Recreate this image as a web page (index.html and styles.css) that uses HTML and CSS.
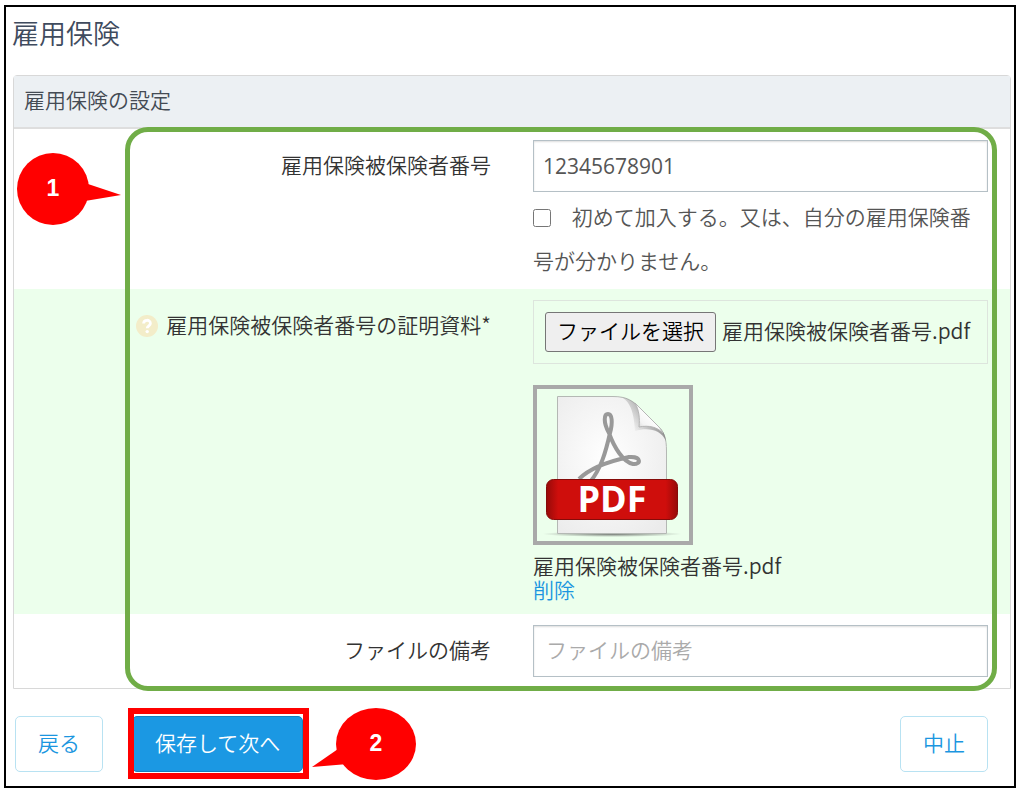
FILE: index.html
```html
<!DOCTYPE html>
<html lang="ja">
<head>
<meta charset="UTF-8">
<meta name="viewport" content="width=device-width, initial-scale=1">
<title>雇用保険</title>
<link rel="stylesheet" href="styles.css">
</head>
<body>
<form class="page">
	<h1 class="page-title">雇用保険</h1>

	<section class="panel">
		<h2 class="panel-heading">雇用保険の設定</h2>

		<div class="row">
			<div class="row-label">
				<label for="number">雇用保険被保険者番号</label>
			</div>
			<div class="row-field">
				<input class="text-input number-input" type="text" id="number" value="12345678901">
				<div class="check">
					<input class="check-box" type="checkbox" id="first">
					<label for="first">初めて加入する。又は、自分の雇用保険番号が分かりません。</label>
				</div>
			</div>
		</div>

		<div class="row row-green">
			<div class="row-label">
				<svg class="help" viewBox="0 0 22 22" aria-hidden="true">
					<circle cx="11" cy="11" r="11" fill="#f3edc9"/>
					<path d="M7.6 8.6C7.6 4.2 14.4 4.2 14.4 8.4C14.4 10.8 11.2 10.8 11.2 13.2" fill="none" stroke="#fff" stroke-width="2.8"/>
					<circle cx="11.2" cy="16.6" r="1.7" fill="#fff"/>
				</svg>
				<label for="file">雇用保険被保険者番号の証明資料*</label>
			</div>
			<div class="row-field">
				<div class="file-box">
					<input class="file-input" type="file" id="file">
					<label class="file-button" for="file">ファイルを選択</label>
					<span class="file-name">雇用保険被保険者番号.pdf</span>
				</div>
				<div class="thumb">
					<svg class="thumb-icon" viewBox="0 0 152 152" aria-hidden="true">
						<defs>
							<radialGradient id="paper" cx="0.45" cy="0.45" r="0.7">
								<stop offset="0" stop-color="#fff"/>
								<stop offset="1" stop-color="#ebebeb"/>
							</radialGradient>
							<linearGradient id="fold" x1="0" y1="1" x2="0.6" y2="0.4">
								<stop offset="0" stop-color="#b9b9b9"/>
								<stop offset="0.5" stop-color="#f4f4f4"/>
								<stop offset="1" stop-color="#fff"/>
							</linearGradient>
							<linearGradient id="shade" x1="0" y1="0.6" x2="0.7" y2="0.2">
								<stop offset="0.2" stop-color="#999" stop-opacity="0"/>
								<stop offset="1" stop-color="#777" stop-opacity="0.9"/>
							</linearGradient>
							<linearGradient id="ribbon">
								<stop offset="0" stop-color="#970a09"/>
								<stop offset="0.09" stop-color="#cf0e0c"/>
								<stop offset="0.91" stop-color="#cf0e0c"/>
								<stop offset="1" stop-color="#970a09"/>
							</linearGradient>
							<radialGradient id="floor">
								<stop offset="0" stop-color="#555" stop-opacity="0.8"/>
								<stop offset="1" stop-color="#555" stop-opacity="0"/>
							</radialGradient>
						</defs>
						<ellipse cx="75" cy="145" rx="70" ry="3" fill="url(#floor)"/>
						<path d="M20.5 7.5H76C90 7.5 96 12 103 19L121 37C127 43 129.5 49 129.5 62V144.5H20.5Z" fill="url(#paper)" stroke="#b4b8b4"/>
						<path d="M82 8C91 9 97 20 98 42C110 38 124 40 129 52C128 44 125 41 121 37L103 19C96 12 90 8 82 8Z" fill="url(#shade)"/>
						<path d="M98 14C102 21 103 29 102 38C112 36 120 38 126 44C124 40 122 38 121 37L103 19Z" fill="url(#fold)" stroke="#b5b5b5"/>
						<path d="M42 90C54 78 78 71 92 68C105 67 104 76 96 75C86 73 77 58 72 44C66 33 67 25 71 25C75 25 76 33 73 44C69 62 64 80 53 93" fill="none" stroke="#999" stroke-width="4"/>
						<rect x="9.5" y="90.5" width="131" height="40" rx="7" fill="url(#ribbon)" stroke="#850b0a"/>
						<text class="thumb-text" x="75" y="123" text-anchor="middle">PDF</text>
					</svg>
				</div>
				<div class="uploaded">雇用保険被保険者番号.pdf</div>
				<a class="delete" href="#">削除</a>
			</div>
		</div>

		<div class="row">
			<div class="row-label">
				<label for="note">ファイルの備考</label>
			</div>
			<div class="row-field">
				<input class="text-input" type="text" id="note" placeholder="ファイルの備考">
			</div>
		</div>

		<div class="mark-green"></div>
		<svg class="bubble bubble-1" viewBox="0 0 104 72">
			<ellipse cx="36" cy="36" rx="36" ry="36"/>
			<path d="M68 30L104 42L68 48Z"/>
			<text x="36" y="43" text-anchor="middle">1</text>
		</svg>
	</section>

	<div class="actions">
		<button class="btn" type="button">戻る</button>
		<div class="save">
			<button class="btn btn-primary" type="submit">保存して次へ</button>
			<div class="mark-red"></div>
			<svg class="bubble bubble-2" viewBox="0 0 104 72">
				<ellipse cx="64" cy="36" rx="40" ry="36"/>
				<path d="M26 41L0 59L36 56Z"/>
				<text x="64" y="43" text-anchor="middle">2</text>
			</svg>
		</div>
		<button class="btn btn-stop" type="button">中止</button>
	</div>
</form>
</body>
</html>
```
FILE: styles.css
```css
*{
	box-sizing: border-box;
}
body{
	margin: 5px 3px 1px 4px;
	background: #fff;
	color: #333;
	font: 350 21px/24px "Noto Sans CJK JP", sans-serif;
}
input, button{
	font: inherit;
}
.page{
	border: 2px solid #000;
	padding: 6px 3px 14px 6px;
}
.page-title{
	margin: 0 0 22px;
	color: #3f4b5e;
	font-size: 27px;
	font-weight: 350;
	line-height: 40px;
}

/* panel */
.panel{
	position: relative;
	margin-left: 1px;
	border: 1px solid #d8d8d8;
	border-radius: 4px 4px 0 0;
}
.panel-heading{
	margin: 0;
	padding: 0 10px 4px;
	border-bottom: 2px solid #dedede;
	background: #ecf0f3;
	color: #444b54;
	font-size: 21px;
	font-weight: 350;
	line-height: 47px;
}
.row{
	display: grid;
	grid-template-columns: 1fr 1fr;
	padding: 11px 0;
}
.row-green{
	background: #ecffec;
}
.row-label{
	display: flex;
	justify-content: flex-end;
	align-items: center;
	gap: 8px;
	height: 48px;
	padding-right: 21px;
}
.row-field{
	padding: 0 22px 0 21px;
}
.text-input{
	display: block;
	width: 100%;
	height: 52px;
	padding: 0 12px 4px;
	border: 1px solid #b5c0c6;
	box-shadow: inset 0 1px 2px #ddd;
	color: #555;
}
.text-input::placeholder{
	color: #aaa;
}
.number-input{
	padding: 0 9px;
	font-family: "Open Sans", sans-serif;
	font-weight: 400;
}
.check{
	padding-top: 2px;
	margin-bottom: -4px;
	color: #555;
	line-height: 44px;
}
.check-box{
	width: 18px;
	height: 18px;
	margin: 0 16px 0 0;
	vertical-align: -2px;
}
.help{
	width: 22px;
	height: 22px;
	margin-top: 4px;
}

/* file */
.file-box{
	position: relative;
	display: flex;
	align-items: center;
	gap: 6px;
	height: 64px;
	padding: 0 11px;
	border: 1px solid #dde5dd;
	white-space: nowrap;
}
.file-input{
	position: absolute;
	width: 1px;
	height: 1px;
	opacity: 0;
}
.file-button{
	padding: 0 11px 4px;
	border: 1px solid #767676;
	border-radius: 3px;
	background: #efefef;
	color: #000;
	line-height: 34px;
}
.file-name{
	padding-bottom: 4px;
}
.thumb{
	width: 160px;
	height: 160px;
	margin: 21px 0 8px;
	border: 4px solid #a9a9a9;
}
.thumb-icon{
	display: block;
}
.thumb-text{
	fill: #fff;
	font: bold 36px "Open Sans", sans-serif;
}
.delete{
	display: block;
	width: fit-content;
	margin-bottom: 2px;
	color: #1b96e0;
	text-decoration: none;
}

/* buttons */
.actions{
	display: flex;
	padding: 27px 23px 0 3px;
}
.btn{
	min-width: 88px;
	height: 56px;
	padding: 0 20px 4px;
	border: 1px solid #b8e2f2;
	border-radius: 5px;
	background: #fff;
	color: #1b96e0;
}
.btn-primary{
	padding: 0 22px 4px;
	border-color: #1580bd;
	background: #1b98e3;
	color: #fff;
}
.btn-stop{
	margin-left: auto;
}
.save{
	position: relative;
	margin-left: 29px;
}

/* marks over the form */
.mark-green{
	position: absolute;
	inset: 51px 13px -3px 111px;
	border: 5px solid #70ad47;
	border-radius: 23px;
	pointer-events: none;
}
.mark-red{
	position: absolute;
	inset: -8px -6px -7px -4px;
	border: 6px solid #f00;
	pointer-events: none;
}
.bubble{
	position: absolute;
	width: 104px;
	height: 72px;
	fill: #f00;
}
.bubble text{
	fill: #fff;
	font: bold 23px "Liberation Sans", sans-serif;
}
.bubble-1{
	top: 77px;
	left: 3px;
}
.bubble-2{
	top: -8px;
	left: calc(100% + 9px);
}
```
